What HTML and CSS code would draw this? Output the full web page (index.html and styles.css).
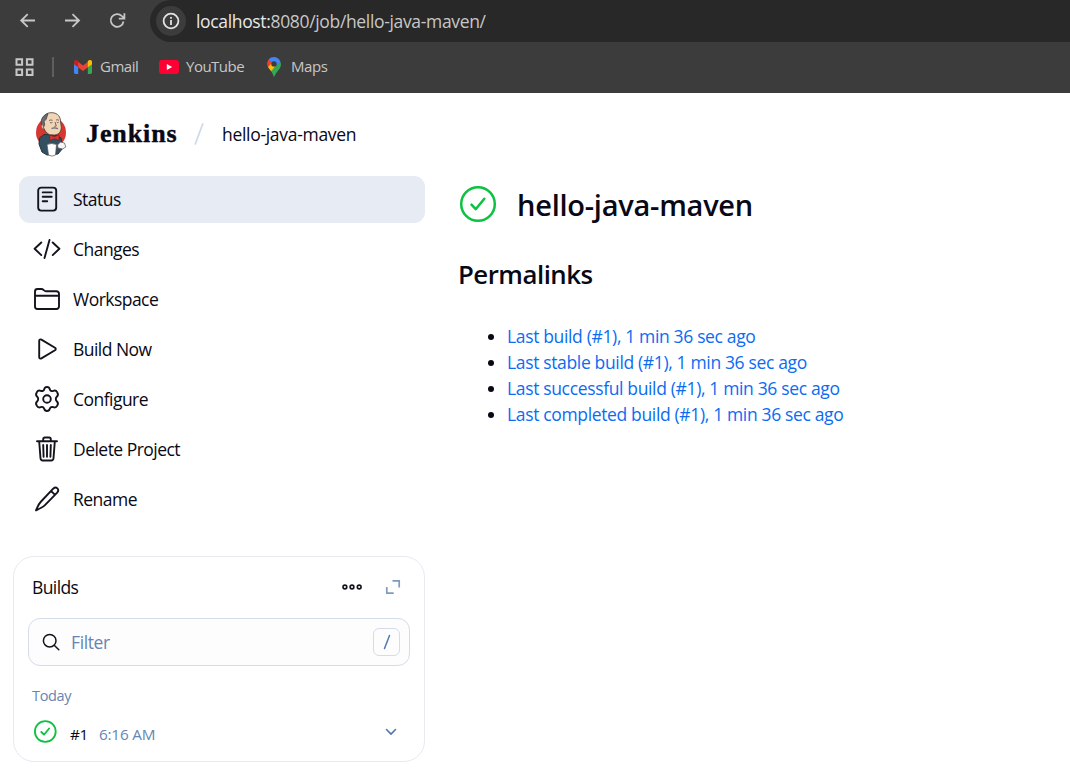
FILE: index.html
```html
<!DOCTYPE html>
<html lang="en">
<head>
<meta charset="utf-8">
<title>hello-java-maven [Jenkins]</title>
<link rel="stylesheet" href="styles.css">
</head>
<body>
<div class="browser">
  <div class="toolbar">
    <div class="nav">
      <svg width="18" height="18" viewBox="0 0 18 18"><path d="M16 8.500H2.500M8.700 2.200 2.200 8.500l6.500 6.300"/></svg>
      <svg width="18" height="18" viewBox="0 0 18 18"><path d="M1 8.500h14M8.500 2.200 15 8.500l-6.500 6.300"/></svg>
      <svg width="18" height="18" viewBox="0 0 18 18"><path d="M14.500 9.500A6.400 6.400 0 1 1 12.800 4L15 6.200M15.400 1.200v5.500H9.800"/></svg>
    </div>
    <div class="address">
      <span class="info"><svg width="18" height="18" viewBox="0 0 18 18"><circle cx="9" cy="9" r="7.400"/><path d="M9 8v5M9 4.900v1.900"/></svg></span>
      <span class="url"><b>localhost:</b>8080/job/hello-java-maven/</span>
    </div>
  </div>
  <div class="bookmarks">
    <svg class="apps" width="20" height="20" viewBox="0 0 20 20"><path d="M1.500 2.200h5.600v5.600H1.500zM11.900 2.200h5.600v5.600h-5.600zM1.500 12.400h5.600V18H1.500zM11.900 12.400h5.600V18h-5.600z"/></svg>
    <span class="divider"></span>
    <a class="bookmark gmail"><svg width="18" height="14" viewBox="0 0 18 14"><path fill="#4285f4" d="M0 3.500h4.200V14H1.400A1.400 1.400 0 0 1 0 12.600z"/><path fill="#34a853" d="M13.800 3.500H18v9.100a1.400 1.400 0 0 1-1.400 1.400h-2.800z"/><path fill="#ea4335" d="M4 1.800 9 5.600l5-3.800v5.400L9 11 4 7.200z"/><path fill="#c5221f" d="M0 2C0 .1 2.100-.6 3.500.5l.7.6v6.200L0 4.200z"/><path fill="#fbbc04" d="M18 2c0-1.900-2.100-2.600-3.500-1.500l-.7.6v6.200L18 4.200z"/></svg><span>Gmail</span></a>
    <a class="bookmark youtube"><svg width="20" height="14" viewBox="0 0 20 14"><rect width="20" height="14" rx="3" fill="#ff0033"/><path fill="#fff" d="m7.800 4 5.400 3-5.400 3z"/></svg><span>YouTube</span></a>
    <a class="bookmark maps"><svg width="14" height="20" viewBox="0 0 14 20"><path fill="#34a853" d="M13.500 5C14.600 8.200 13.600 10.500 11.500 13 9 15.800 8.500 17.500 7 20 5.800 17.500 5.500 16 4 14z"/><path fill="#fbbc04" d="M.8 9.500 5 5.200 9 8.800 4.200 14.200C2.800 12.500 1.500 11.200.8 9.500z"/><path fill="#ea4335" d="M1.700 2.500 5.500 5.500 1 10C-.2 7.500-.1 4.700 1.700 2.500z"/><path fill="#4285f4" d="M1.700 2.500C5-1.300 11.500-.7 13.500 5L9.500 9.200 4.700 5.300z"/><circle cx="7" cy="6.900" r="2.700" fill="#3c3c3c"/></svg><span>Maps</span></a>
  </div>
</div>

<header class="header">
  <svg class="logo" width="32" height="46" viewBox="0 0 32 46">
    <ellipse cx="16" cy="21.500" rx="15" ry="15.500" fill="#d33833"/>
    <path fill="#335061" stroke="#263238" d="M9 23.500 4.500 27 4 33l3 8 5 3 11-1 5-6-2-10-6-3z"/>
    <path fill="#f0d6b7" stroke="#49372e" stroke-width=".8" d="M7 10C8 4 12 1.500 17 1.700c6 .2 8.600 4.300 8.600 9.500l.7 5c-.1 4.500-2.300 7-6.500 7.800l-5.200-.2C11 22 9 18.500 8 15z"/>
    <path fill="#6d6b6d" stroke="#333" stroke-width=".6" d="M13 2.700C8 4 5.300 8 6.500 13.500l2 3 1.200-2.700-.5-3.500 2-2z"/>
    <path fill="#f7e4cd" stroke="#7b5947" stroke-width=".6" d="M7.500 13.500c-2 .4-1 4.500 1.300 4z"/>
    <path fill="none" stroke="#49372e" stroke-width=".7" d="M14 9.500q2-1.200 3.500-.1M21 9q2-.7 3 .4M15 11.500q1.200.8 2.400 0M21.700 11.300q1 .6 2 0M20 11l1.300 4-2 .4"/>
    <path stroke="#6d6b6d" stroke-width="1.300" fill="none" d="M16.500 17.500q3-1.300 6.500.2"/>
    <path fill="#d33833" stroke="#811" stroke-width=".6" d="m14.500 24 5 1.700 4.500-2v5.600l-4.500-1.600-4.500 1.800z"/>
    <path fill="#fff" stroke="#555" stroke-width=".7" d="M12 33.500q4.500-2 9.500 0L20.500 44q-3.500 2.300-7 0z"/>
    <path fill="#f5f5f5" stroke="#555" stroke-width=".7" d="m22.500 34 3-3 4 1 1.300 4-3.300 2-4.500-1z"/>
  </svg>
  <span class="brand">Jenkins</span>
  <svg class="slash" width="10" height="22" viewBox="0 0 10 22"><path d="M8.700 1 1.300 21"/></svg>
  <span class="crumb">hello-java-maven</span>
</header>

<div class="page">
  <aside class="side">
    <nav class="tasks">
      <a class="task active"><svg viewBox="0 0 28 28"><rect x="5.200" y="2.600" width="18" height="23" rx="3"/><path d="M9.700 7.400h9M9.700 11.800h9M9.700 16.200h4.500"/></svg><span>Status</span></a>
      <a class="task"><svg viewBox="0 0 28 28"><path d="m8.300 7.500-6.700 6.300 6.700 6.300M19.700 7.500l6.700 6.300-6.700 6.300M16.500 5l-5 18"/></svg><span>Changes</span></a>
      <a class="task"><svg viewBox="0 0 28 28"><path d="M2 21.500v-15A2.500 2.500 0 0 1 4.500 4h4c2 0 2.500 2.300 4.500 2.300h10.500a2.500 2.500 0 0 1 2.500 2.500v12.700a2.500 2.500 0 0 1-2.500 2.500h-19A2.500 2.500 0 0 1 2 21.500zM2 10.800h24"/></svg><span>Workspace</span></a>
      <a class="task"><svg viewBox="0 0 28 28"><path d="M6.200 5.800v16.400c0 1.200 1.200 1.800 2.200 1.200l13.600-8.200c1-.6 1-1.800 0-2.400L8.400 4.600c-1-.6-2.200 0-2.200 1.200z"/></svg><span>Build Now</span></a>
      <a class="task"><svg viewBox="0 0 28 28"><circle cx="14" cy="14" r="3.800"/><path d="M11.200 4.200C11.600 2.500 12.400 2 14 2s2.400.5 2.800 2.200c.4 1.600 1.900 2.300 3.500 1.600 1.700-.7 2.900-.4 4 1.600 1.200 2 .9 3.100-.5 4.300-1.300 1.100-1.300 3.500 0 4.600 1.400 1.200 1.700 2.300.5 4.300-1.100 2-2.300 2.300-4 1.600-1.600-.7-3.100 0-3.500 1.600-.4 1.700-1.200 2.200-2.800 2.200s-2.400-.5-2.800-2.200c-.4-1.600-1.900-2.300-3.500-1.600-1.700.7-2.900.4-4-1.600-1.200-2-.9-3.100.5-4.300 1.300-1.100 1.300-3.500 0-4.600C2.800 10.500 2.500 9.400 3.700 7.400c1.100-2 2.300-2.300 4-1.600 1.600.7 3.100 0 3.500-1.600z"/></svg><span>Configure</span></a>
      <a class="task"><svg viewBox="0 0 28 28"><path d="M4 6.200h20M6.200 6.500l1.300 16.800c.1 1.300.9 2.200 2.200 2.200h8.600c1.300 0 2.100-.9 2.200-2.200L21.800 6.500M10.200 6V4.200c0-1 .6-1.700 1.700-1.700h4.200c1.100 0 1.700.7 1.700 1.700V6M14 10v11.700M10.200 10l.4 11.700M17.800 10l-.4 11.700"/></svg><span>Delete Project</span></a>
      <a class="task"><svg viewBox="0 0 28 28"><path d="M20.200 3.700c3-2.700 6.700.6 4 4L11.700 20.300c-1.800 1.800-3.800 2.700-8.700 5 2-4.200 2.800-6.500 4.600-8.300zM18 5.900l4 4"/></svg><span>Rename</span></a>
    </nav>
    <section class="builds">
      <div class="builds-head">
        <h3>Builds</h3>
        <svg width="22" height="10" viewBox="0 0 22 10"><g fill="none" stroke="#14141f" stroke-width="1.600"><circle cx="3.900" cy="5" r="1.900"/><circle cx="11" cy="5" r="1.900"/><circle cx="18.200" cy="5" r="1.900"/></g></svg>
        <svg width="16" height="16" viewBox="0 0 16 16"><path fill="none" stroke="#819bc0" stroke-width="1.700" d="M7.500 1.900h6.700v6.700M1.800 8v6.100h6.900"/></svg>
      </div>
      <div class="filter">
        <svg width="18" height="18" viewBox="0 0 18 18"><path fill="none" stroke="#14141f" stroke-width="1.500" stroke-linecap="round" d="M14 7.700a6.300 6.300 0 1 1-12.600 0 6.300 6.300 0 0 1 12.600 0zM12.200 12.200l4.600 4.600"/></svg>
        <span class="placeholder">Filter</span>
        <span class="key"><svg width="8" height="16" viewBox="0 0 8 16"><path fill="none" stroke="#5478b0" stroke-width="1.500" stroke-linecap="round" d="M6.500 1.500 1.500 14.500"/></svg></span>
      </div>
      <div class="day">Today</div>
      <div class="build">
        <svg width="24" height="24" viewBox="0 0 24 24"><g class="ok"><circle cx="12.300" cy="11.500" r="10.400"/><path d="m8.300 12 2.700 2.700 5.100-6.200"/></g></svg>
        <span class="num">#1</span><span class="time">6:16 AM</span>
        <svg width="12" height="8" viewBox="0 0 12 8"><path fill="none" stroke="#5478b0" stroke-width="1.600" stroke-linecap="round" stroke-linejoin="round" d="m1.500 1.500 4.500 4.600 4.500-4.600"/></svg>
      </div>
    </section>
  </aside>
  <main class="main">
    <h1><svg width="38" height="38" viewBox="0 0 38 38"><g class="ok big"><circle cx="19" cy="19" r="16.800"/><path d="m12.500 19.700 4.200 4.500 8.600-10.500"/></g></svg><span>hello-java-maven</span></h1>
    <h2>Permalinks</h2>
    <ul>
      <li><a>Last build (#1), 1 min 36 sec ago</a></li>
      <li><a>Last stable build (#1), 1 min 36 sec ago</a></li>
      <li><a>Last successful build (#1), 1 min 36 sec ago</a></li>
      <li><a>Last completed build (#1), 1 min 36 sec ago</a></li>
    </ul>
  </main>
</div>
</body>
</html>
```
FILE: styles.css
```css
* { box-sizing: border-box; }
body { margin: 0; width: 1070px; height: 783px; overflow: hidden; background: #fff; color: #080816; font-family: "Open Sans", "Noto Sans", sans-serif; font-size: 17.5px; white-space: nowrap; }
svg { flex: none; display: block; }
h1, h2, h3, ul { margin: 0; padding: 0; font-weight: 400; }

.browser { height: 93px; background: #3c3c3c; color: #c7c7c7; }
.toolbar { display: flex; height: 42px; }
.nav { display: flex; gap: 27px; width: 150px; padding: 12px 0 0 19px; }
.nav svg { fill: none; stroke: #c7c7c7; stroke-width: 1.8; }
.address { flex: 1; display: flex; align-items: center; height: 42px; padding-left: 6px; background: #282828; border-radius: 21px 0 0 21px; }
.info { display: grid; place-items: center; width: 30px; height: 30px; border-radius: 50%; background: #3c3c3c; }
.info svg { fill: none; stroke: #e3e3e3; stroke-width: 1.8; }
.url { margin-left: 10px; letter-spacing: -.34px; color: #c7c7c7; }
.url b { font-weight: 400; color: #e8e8e8; }
.bookmarks { display: flex; align-items: center; height: 50px; padding-left: 15px; font-size: 15px; }
.apps { fill: none; stroke: #c7c7c7; stroke-width: 2; }
.divider { width: 2px; height: 20px; margin: 0 20px 0 17px; background: #5e5e5e; }
.bookmark { display: flex; align-items: center; gap: 7px; }
.gmail { width: 85px; gap: 8px; }
.youtube { width: 108px; }
.maps { gap: 10px; }
.bookmark span { margin-top: -3px; letter-spacing: -.5px; }
.maps span { letter-spacing: -.4px; }

.header { display: flex; align-items: center; height: 82px; margin-bottom: 1px; padding-left: 35px; }
.brand { width: 91px; margin: 0 0 0 19px; font: bold 26px "Liberation Serif", serif; letter-spacing: .9px; -webkit-text-stroke: .4px #080816; }
.slash { margin: 0 18px 0 17px; fill: none; stroke: #cfdaea; stroke-width: 1.8; stroke-linecap: round; }
.crumb { letter-spacing: -.3px; }

.page { display: flex; }
.side { width: 425px; padding-left: 13px; }
.tasks { display: grid; gap: 3px; padding-left: 6px; }
.task { display: flex; align-items: center; gap: 12px; height: 47px; padding-left: 14px; border-radius: 11px; }
.active { background: #e7ebf3; }
.task svg { width: 28px; height: 28px; margin: -1px 0 0; fill: none; stroke: #14141f; stroke-width: 1.9; stroke-linecap: round; stroke-linejoin: round; }
.task span { margin-top: -1px; letter-spacing: -.53px; }

.builds { height: 206px; margin-top: 33px; padding: 0 14px; border: 1px solid #e7eaf3; border-radius: 21px; }
.builds-head { display: flex; align-items: center; height: 61px; padding: 0 9px 2px 4px; }
.builds-head h3 { flex: 1; font-size: 17.5px; letter-spacing: -.6px; }
.builds-head svg + svg { margin-left: 22px; }
.filter { display: flex; align-items: center; height: 48px; padding: 0 9px 0 13px; border: 1px solid #d4dcea; border-radius: 12px; background: #fdfdfd; }
.placeholder { flex: 1; margin-left: 11px; color: #6684b3; letter-spacing: -.4px; }
.key { display: grid; place-items: center; width: 27px; height: 28px; border: 1px solid #d4dcea; border-radius: 6px; }
.day { margin: 20px 0 0 4px; font-size: 14.5px; line-height: 20px; letter-spacing: -.35px; color: #6684b3; }
.build { display: flex; align-items: center; height: 51px; padding: 0 13px 0 5px; font-size: 15.3px; }
.num { margin: 4px 0 0 13px; width: 29px; letter-spacing: -.3px; }
.time { flex: 1; margin-top: 4px; color: #6684b3; letter-spacing: -.2px; }
.ok { fill: none; stroke: #0dc143; stroke-width: 1.8; stroke-linecap: round; stroke-linejoin: round; }
.big { stroke-width: 2.5; }

.main { padding: 9px 0 0 33px; }
h1 { display: flex; align-items: center; gap: 20px; height: 38px; margin-left: 1px; font-size: 29px; font-weight: 600; letter-spacing: -.25px; }
h2 { margin-top: 33px; font-size: 25.8px; font-weight: 600; line-height: 36px; letter-spacing: -.5px; }
ul { margin-top: 31px; padding-left: 49px; }
li { line-height: 26px; }
li a { color: #0b6cf2; letter-spacing: -.35px; }
```
